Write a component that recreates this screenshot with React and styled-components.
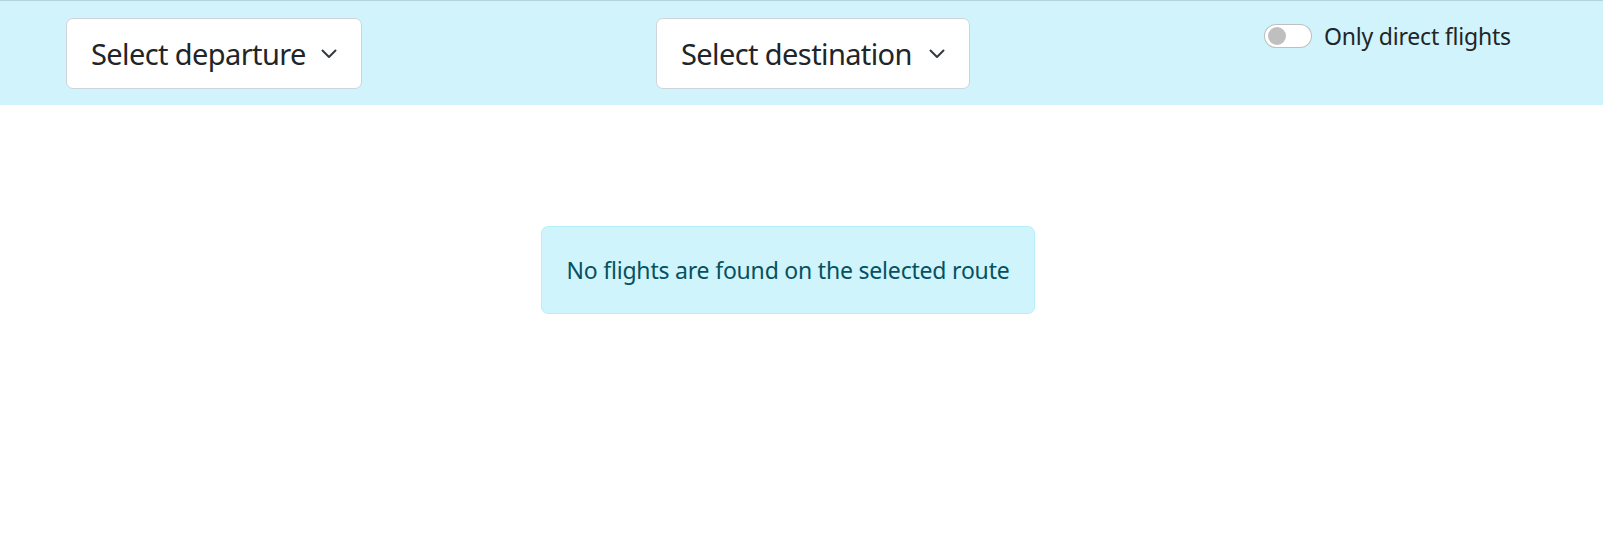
import styled, { createGlobalStyle } from 'styled-components';

const GlobalStyle = createGlobalStyle`
  * {
    box-sizing: border-box;
  }

  body {
    margin: 0;
    background: #fff;
    color: #212529;
    font-family: 'Noto Sans', 'Open Sans', sans-serif;
    font-size: 24px;
    line-height: 1.5;
  }
`;

const Header = styled.header`
  display: grid;
  grid-template-columns: 590px 608px 1fr;
  align-items: start;
  padding: 17px 0 16px 66px;
  background: #d1f3fc;
  border-top: 1px solid #b4d3de;
`;

const Select = styled.button`
  display: flex;
  align-items: center;
  justify-content: space-between;
  width: ${(p) => p.$width}px;
  height: 71px;
  padding: 0 24px 0 24px;
  background: #fff;
  border: 1px solid #ced4da;
  border-radius: 7px;
  color: #212529;
  font-family: inherit;
  font-size: 29px;
  letter-spacing: -0.6px;
  line-height: 1.5;
  white-space: nowrap;
  cursor: pointer;
`;

const Chevron = () => (
  <svg width="16" height="10" viewBox="0 0 16 10" fill="none">
    <path d="M1.5 1.5l6.5 6.5 6.5-6.5" stroke="#343a40" strokeWidth="2" strokeLinecap="round" strokeLinejoin="round" />
  </svg>
);

const SwitchRow = styled.label`
  display: flex;
  align-items: flex-start;
  gap: 12px;
  cursor: pointer;
`;

const Switch = styled.span`
  display: inline-flex;
  align-items: center;
  flex-shrink: 0;
  width: 48px;
  height: 24px;
  margin-top: 6px;
  padding: 0 3px;
  background: #fff;
  border: 1px solid rgba(0, 0, 0, 0.25);
  border-radius: 12px;

  &::before {
    content: '';
    width: 18px;
    height: 18px;
    border-radius: 50%;
    background: #bfbfbf;
  }
`;

const SwitchLabel = styled.span`
  font-size: 23px;
  letter-spacing: -0.2px;
  line-height: 36px;
  white-space: nowrap;
  color: #212529;
`;

const Main = styled.main`
  display: flex;
  justify-content: center;
  padding: 121px 27px 0 0;
`;

const Alert = styled.div`
  padding: 24px;
  background: #cff4fc;
  border: 1px solid #b6effb;
  border-radius: 7px;
  color: #055160;
  font-size: 23px;
  letter-spacing: -0.2px;
  line-height: 38px;
  white-space: nowrap;
`;

const App = () => (
  <>
    <GlobalStyle />
    <Header>
      <div>
        <Select $width={296}>
          Select departure
          <Chevron />
        </Select>
      </div>
      <div>
        <Select $width={314}>
          Select destination
          <Chevron />
        </Select>
      </div>
      <SwitchRow>
        <Switch />
        <SwitchLabel>Only direct flights</SwitchLabel>
      </SwitchRow>
    </Header>
    <Main>
      <Alert>No flights are found on the selected route</Alert>
    </Main>
  </>
);

export default App;
